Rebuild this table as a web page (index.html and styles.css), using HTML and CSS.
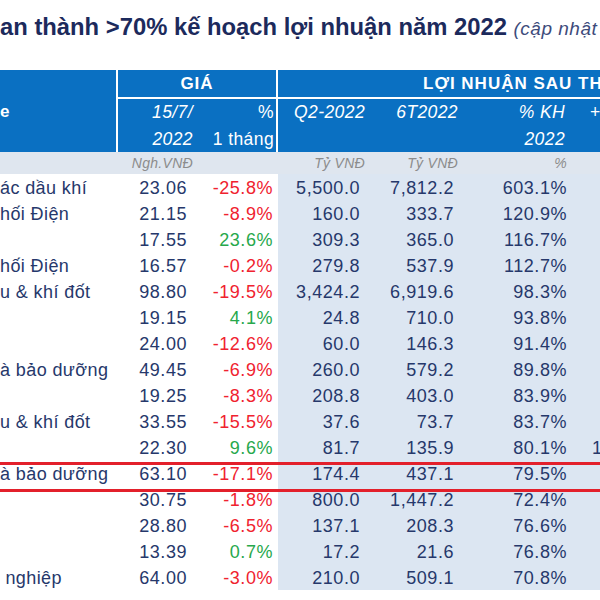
FILE: index.html
```html
<!DOCTYPE html>
<html lang="vi">
<head>
<meta charset="utf-8">
<title>Kế hoạch lợi nhuận 2022</title>
<link rel="stylesheet" href="styles.css">
</head>
<body>
<h1 class="title">an thành &gt;70% kế hoạch lợi nhuận năm 2022 <span class="note">(cập nhật đến 15/7/2022)</span></h1>
<div class="sheet">
<table class="grid">
<colgroup>
<col class="c-name"><col class="c-price"><col class="c-chg"><col class="c-q2"><col class="c-6t"><col class="c-kh"><col class="c-yoy">
</colgroup>
<thead>
<tr class="hrow1">
<th rowspan="2" class="h-name">e</th>
<th colspan="2" class="h-grp h-gia">GIÁ</th>
<th colspan="4" class="h-grp h-ln">LỢI NHUẬN SAU THUẾ</th>
</tr>
<tr class="hrow2">
<th class="h-it h-price">15/7/<br>2022</th>
<th class="h-chg">%<br>1 tháng</th>
<th class="h-it h-q2">Q2-2022</th>
<th class="h-it h-6t">6T2022</th>
<th class="h-it h-kh">% KH<br>2022</th>
<th class="h-yoy">+/-</th>
</tr>
<tr class="units">
<td></td>
<td class="u-price">Ngh.VNĐ</td>
<td></td>
<td class="u-q2">Tỷ VNĐ</td>
<td class="u-6t">Tỷ VNĐ</td>
<td class="u-kh">%</td>
<td></td>
</tr>
</thead>
<tbody>
<tr><td class="name">ác dầu khí</td><td class="price">23.06</td><td class="chg neg">-25.8%</td><td class="q2">5,500.0</td><td class="t6">7,812.2</td><td class="kh">603.1%</td><td class="yoy"></td></tr>
<tr><td class="name">hối Điện</td><td class="price">21.15</td><td class="chg neg">-8.9%</td><td class="q2">160.0</td><td class="t6">333.7</td><td class="kh">120.9%</td><td class="yoy"></td></tr>
<tr><td class="name"></td><td class="price">17.55</td><td class="chg pos">23.6%</td><td class="q2">309.3</td><td class="t6">365.0</td><td class="kh">116.7%</td><td class="yoy"></td></tr>
<tr><td class="name">hối Điện</td><td class="price">16.57</td><td class="chg neg">-0.2%</td><td class="q2">279.8</td><td class="t6">537.9</td><td class="kh">112.7%</td><td class="yoy"></td></tr>
<tr><td class="name">u &amp; khí đốt</td><td class="price">98.80</td><td class="chg neg">-19.5%</td><td class="q2">3,424.2</td><td class="t6">6,919.6</td><td class="kh">98.3%</td><td class="yoy"></td></tr>
<tr><td class="name"></td><td class="price">19.15</td><td class="chg pos">4.1%</td><td class="q2">24.8</td><td class="t6">710.0</td><td class="kh">93.8%</td><td class="yoy"></td></tr>
<tr><td class="name"></td><td class="price">24.00</td><td class="chg neg">-12.6%</td><td class="q2">60.0</td><td class="t6">146.3</td><td class="kh">91.4%</td><td class="yoy"></td></tr>
<tr><td class="name">à bảo dưỡng</td><td class="price">49.45</td><td class="chg neg">-6.9%</td><td class="q2">260.0</td><td class="t6">579.2</td><td class="kh">89.8%</td><td class="yoy"></td></tr>
<tr><td class="name"></td><td class="price">19.25</td><td class="chg neg">-8.3%</td><td class="q2">208.8</td><td class="t6">403.0</td><td class="kh">83.9%</td><td class="yoy"></td></tr>
<tr><td class="name">u &amp; khí đốt</td><td class="price">33.55</td><td class="chg neg">-15.5%</td><td class="q2">37.6</td><td class="t6">73.7</td><td class="kh">83.7%</td><td class="yoy"></td></tr>
<tr><td class="name"></td><td class="price">22.30</td><td class="chg pos">9.6%</td><td class="q2">81.7</td><td class="t6">135.9</td><td class="kh">80.1%</td><td class="yoy">1</td></tr>
<tr><td class="name">à bảo dưỡng</td><td class="price">63.10</td><td class="chg neg">-17.1%</td><td class="q2">174.4</td><td class="t6">437.1</td><td class="kh">79.5%</td><td class="yoy"></td></tr>
<tr><td class="name"></td><td class="price">30.75</td><td class="chg neg">-1.8%</td><td class="q2">800.0</td><td class="t6">1,447.2</td><td class="kh">72.4%</td><td class="yoy"></td></tr>
<tr><td class="name"></td><td class="price">28.80</td><td class="chg neg">-6.5%</td><td class="q2">137.1</td><td class="t6">208.3</td><td class="kh">76.6%</td><td class="yoy"></td></tr>
<tr><td class="name"></td><td class="price">13.39</td><td class="chg pos">0.7%</td><td class="q2">17.2</td><td class="t6">21.6</td><td class="kh">76.8%</td><td class="yoy"></td></tr>
<tr><td class="name">&nbsp;nghiệp</td><td class="price">64.00</td><td class="chg neg">-3.0%</td><td class="q2">210.0</td><td class="t6">509.1</td><td class="kh">70.8%</td><td class="yoy"></td></tr>
</tbody>
</table>
<div class="highlight"></div>
</div>
</body>
</html>
```

FILE: styles.css
```css
* { box-sizing: border-box; }
html, body { margin: 0; background: #ffffff; }
body {
  width: 600px;
  height: 600px;
  overflow: hidden;
  font-family: "Liberation Sans", Arial, sans-serif;
}

.title {
  margin: 0;
  height: 70px;
  padding-top: 12px;
  font-size: 23.8px;
  line-height: 30px;
  font-weight: 700;
  color: #1c2a5c;
  white-space: nowrap;
}
.note {
  font-size: 19px;
  font-style: italic;
  font-weight: 400;
  letter-spacing: 0.5px;
  color: #3d4b7b;
}

.sheet { position: relative; }

.grid {
  table-layout: fixed;
  border-collapse: separate;
  border-spacing: 0;
  width: 720px;
  white-space: nowrap;
}
.c-name { width: 118px; }
.c-price { width: 80px; }
.c-chg { width: 80px; }
.c-q2 { width: 92px; }
.c-6t { width: 92px; }
.c-kh { width: 113px; }
.c-yoy { width: 165px; }

.grid th, .grid td { padding: 0; }

thead th {
  background: #0a70c2;
  color: #ffffff;
  font-weight: 400;
}
.hrow1 th {
  font-size: 17px;
  font-weight: 700;
  letter-spacing: 1px;
  line-height: 27px;
}
.h-name {
  text-align: left;
  vertical-align: middle;
  border-right: 2px solid #ffffff;
}
.h-grp { border-bottom: 2px solid #ffffff; }
.h-gia { text-align: center; border-right: 2px solid #ffffff; }
.h-ln { text-align: left; padding-left: 145px !important; }

.hrow2 th {
  font-size: 17.5px;
  letter-spacing: 0.4px;
  line-height: 26.5px;
  vertical-align: top;
  text-align: right;
}
.h-it { font-style: italic; }
.h-price { padding-right: 5px !important; }
.h-chg { padding-right: 2px !important; border-right: 2px solid #ffffff; }
.h-q2 { padding-right: 5px !important; }
.h-6t { padding-right: 4px !important; }
.h-kh { padding-right: 10px !important; }
.h-yoy { text-align: left !important; padding-left: 15px !important; }

.units td {
  background: #dfe6ef;
  color: #8c8c8c;
  font-size: 14px;
  font-style: italic;
  letter-spacing: 0.3px;
  line-height: 22px;
  text-align: right;
}
.u-price { padding-right: 5px !important; }
.u-q2 { padding-right: 5px !important; }
.u-6t { padding-right: 4px !important; }
.u-kh { padding-right: 8px !important; }

tbody td {
  font-size: 18px;
  letter-spacing: 0.55px;
  line-height: 24px;
  padding-top: 2px !important;
  color: #26386b;
  background: #dce6f2;
  text-align: right;
}
tbody td.name, tbody td.price, tbody td.chg { background: #ffffff; }
tbody td.name { text-align: left; letter-spacing: 0.4px; }
tbody td.price { padding-right: 11px; }
tbody td.chg { padding-right: 5px; }
tbody td.q2 { padding-right: 10px; }
tbody td.t6 { padding-right: 8px; }
tbody td.kh { padding-right: 8px; }
tbody td.yoy { text-align: left; padding-left: 17px; }
.neg { color: #f0222f !important; }
.pos { color: #27a84c !important; }

.highlight {
  position: absolute;
  left: -10px;
  width: 640px;
  top: 392px;
  height: 30px;
  border-top: 3px solid #e3202b;
  border-bottom: 3px solid #e3202b;
  pointer-events: none;
}
```
